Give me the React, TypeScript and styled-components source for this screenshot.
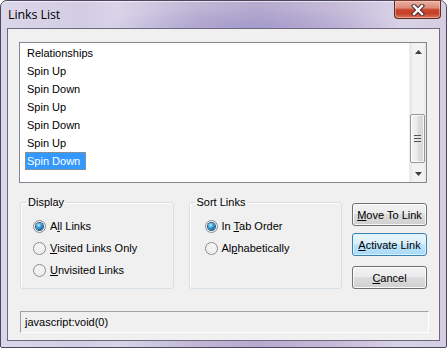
import React from 'react';
import styled, { createGlobalStyle } from 'styled-components';

const Global = createGlobalStyle`
  html, body { margin: 0; padding: 0; background: #ffffff; }
  body { font-family: "Liberation Sans", Arial, sans-serif; font-size: 11px; color: #000; }
  * { box-sizing: border-box; }
`;

const Window = styled.div`
  width: 447px;
  height: 348px;
  display: flex;
  flex-direction: column;
  padding: 0 6px 6px 6px;
  border: 1px solid #4b4760;
  border-radius: 7px 7px 2px 2px;
  background:
    radial-gradient(ellipse 150px 22px at 250px 27px, rgba(150, 140, 200, 0.55), rgba(150, 140, 200, 0) 100%),
    linear-gradient(to right, #dcd6ea 0%, #d3cde4 18%, #d9d4e8 26%, #bfb5d4 45%, #b6abce 58%, #c5bbd8 75%, #d8d2e6 90%, #d4cde3 100%);
  box-shadow: inset 0 1px 0 rgba(255, 255, 255, 0.6);
`;

const TitleBar = styled.div`
  height: 27px;
  display: flex;
  justify-content: space-between;
  align-items: flex-start;
`;

const Title = styled.span`
  font-family: "Open Sans", "Noto Sans", sans-serif;
  font-size: 12.5px;
  color: #000;
  margin: 6px 0 0 1px;
  line-height: 16px;
  letter-spacing: -0.1px;
`;

const CloseButton = styled.div`
  width: 47px;
  height: 19px;
  margin: -1px -1px 0 0;
  border: 1px solid #5e2a24;
  border-top-color: #7a3a30;
  border-radius: 0 0 4px 4px;
  background: linear-gradient(#e9b0a3 0%, #dc8b78 40%, #c8452c 52%, #c54229 75%, #d9775d 100%);
  box-shadow: inset 0 0 0 1px rgba(255, 220, 210, 0.45);
  display: flex;
  align-items: center;
  justify-content: center;
`;

const Client = styled.div`
  flex: 1;
  border: 1px solid #6c687e;
  background: #f0f0f0;
  display: flex;
  flex-direction: column;
  padding: 13px 12px 0 11px;
`;

const ListBox = styled.div`
  height: 141px;
  border: 1px solid #828790;
  background: #ffffff;
  display: flex;
`;

const Items = styled.div`
  flex: 1;
  display: flex;
  flex-direction: column;
  align-items: flex-start;
  padding: 1px 0 0 5px;
`;

const Item = styled.div<{ $selected?: boolean }>`
  height: 18px;
  line-height: 16px;
  padding: 0 5px 0 1px;
  border: 1px ${(p) => (p.$selected ? 'dotted #c9843e' : 'solid transparent')};
  background: ${(p) => (p.$selected ? '#3399ff' : 'transparent')};
  color: ${(p) => (p.$selected ? '#ffffff' : '#000000')};
  white-space: nowrap;
`;

const ScrollBar = styled.div`
  width: 17px;
  display: flex;
  flex-direction: column;
  background: linear-gradient(to right, #e6e6e6 0%, #f2f2f2 20%, #f2f2f2 80%, #e8e8e8 100%);
  border-left: 1px solid #ededed;
`;

const ArrowButton = styled.div`
  height: 17px;
  display: flex;
  align-items: center;
  justify-content: center;
`;

const Track = styled.div`
  flex: 1;
  display: flex;
  flex-direction: column;
  justify-content: flex-end;
  padding: 0 1px 2px 0;
`;

const Thumb = styled.div`
  height: 49px;
  border: 1px solid #979797;
  border-radius: 2px;
  background: linear-gradient(to right, #f3f3f3 0%, #ececec 45%, #dcdcdc 55%, #d6d6d6 100%);
  box-shadow: inset 0 0 0 1px rgba(255, 255, 255, 0.8);
  display: flex;
  align-items: center;
  justify-content: center;
`;

const Grip = styled.div`
  width: 7px;
  height: 8px;
  background: repeating-linear-gradient(to bottom, #555 0px, #555 1px, #e4e4e4 1px, #e4e4e4 2px, transparent 2px, transparent 3px);
`;

const Row = styled.div`
  display: flex;
  align-items: flex-start;
  margin-top: 13px;
  padding-left: 1px;
`;

const Group = styled.fieldset<{ $gap?: number }>`
  width: 154px;
  height: 93px;
  margin: 0 0 0 ${(p) => p.$gap ?? 0}px;
  padding: 0;
  border: 1px solid #d5dfe5;
  border-radius: 3px;
  box-shadow: inset 1px 1px 0 #ffffff;
  min-width: 0;
`;

const Legend = styled.legend`
  margin-left: 5px;
  padding: 0 2px;
  line-height: 13px;
  font-size: 11px;
`;

const RadioList = styled.div<{ $inset: number }>`
  display: flex;
  flex-direction: column;
  padding: 6px 0 0 ${(p) => p.$inset}px;
`;

const RadioRow = styled.label`
  height: 22px;
  display: flex;
  align-items: center;
  gap: 4px;
`;

const RadioCircle = styled.span<{ $checked?: boolean }>`
  width: 13px;
  height: 13px;
  border-radius: 50%;
  border: 1px solid #8d8d8d;
  background: radial-gradient(circle at 50% 45%, #eaeaea 0%, #f6f6f6 35%, #dedede 70%, #c9c9c9 100%);
  box-shadow: inset 0 0 0 1px rgba(255, 255, 255, 0.7);
  display: flex;
  align-items: center;
  justify-content: center;
  flex: none;

  &::after {
    content: '';
    display: ${(p) => (p.$checked ? 'block' : 'none')};
    width: 7px;
    height: 7px;
    border-radius: 50%;
    background: radial-gradient(circle at 38% 32%, #c4f1ff 0%, #4fb4e6 30%, #1272b0 65%, #0a3f6b 100%);
    box-shadow: 0 0 0 1px #2a5a82;
  }
`;

const Buttons = styled.div`
  display: flex;
  flex-direction: column;
  margin: 7px 0 0 10px;
`;

const Button = styled.button<{ $default?: boolean; $gap: number }>`
  width: 75px;
  height: 23px;
  margin-top: ${(p) => p.$gap}px;
  padding: 0;
  font-family: "Liberation Sans", Arial, sans-serif;
  font-size: 11px;
  color: #000;
  border-radius: 3px;
  border: 1px solid ${(p) => (p.$default ? '#3c7fb1' : '#707070')};
  background: ${(p) =>
    p.$default
      ? 'linear-gradient(#eaf6fd 0%, #d9f0fc 49%, #bee6fd 50%, #a7d9f5 100%)'
      : 'linear-gradient(#f2f2f2 0%, #ebebeb 49%, #dddddd 50%, #cfcfcf 100%)'};
  box-shadow: inset 0 0 0 1px ${(p) => (p.$default ? 'rgba(220, 245, 255, 0.9)' : 'rgba(255, 255, 255, 0.85)')};
`;

const Status = styled.div`
  width: 409px;
  height: 22px;
  margin: 22px 0 0 1px;
  padding-left: 4px;
  display: flex;
  align-items: center;
  border: 1px solid;
  border-color: #a0a0a0 #ffffff #ffffff #a0a0a0;
  background: #f0f0f0;
`;

const items = ['Relationships', 'Spin Up', 'Spin Down', 'Spin Up', 'Spin Down', 'Spin Up', 'Spin Down'];

const CloseGlyph = () => (
  <svg width="14" height="12" viewBox="0 0 14 12">
    <path d="M3 2 L11 10 M11 2 L3 10" stroke="#4a2a28" strokeWidth="4.4" strokeLinecap="square" fill="none" />
    <path d="M3 2 L11 10 M11 2 L3 10" stroke="#ffffff" strokeWidth="2.4" strokeLinecap="square" fill="none" />
  </svg>
);

const UpArrow = () => (
  <svg width="7" height="4" viewBox="0 0 7 4">
    <path d="M0 4 L3.5 0 L7 4 Z" fill="#3e3e3e" />
  </svg>
);

const DownArrow = () => (
  <svg width="7" height="4" viewBox="0 0 7 4">
    <path d="M0 0 L7 0 L3.5 4 Z" fill="#3e3e3e" />
  </svg>
);

export default function App() {
  return (
    <>
      <Global />
      <Window>
        <TitleBar>
          <Title>Links List</Title>
          <CloseButton>
            <CloseGlyph />
          </CloseButton>
        </TitleBar>
        <Client>
          <ListBox>
            <Items>
              {items.map((t, i) => (
                <Item key={i} $selected={i === items.length - 1}>
                  {t}
                </Item>
              ))}
            </Items>
            <ScrollBar>
              <ArrowButton>
                <UpArrow />
              </ArrowButton>
              <Track>
                <Thumb>
                  <Grip />
                </Thumb>
              </Track>
              <ArrowButton>
                <DownArrow />
              </ArrowButton>
            </ScrollBar>
          </ListBox>
          <Row>
            <Group>
              <Legend>Display</Legend>
              <RadioList $inset={12}>
                <RadioRow>
                  <RadioCircle $checked />
                  <span>A<u>l</u>l Links</span>
                </RadioRow>
                <RadioRow>
                  <RadioCircle />
                  <span><u>V</u>isited Links Only</span>
                </RadioRow>
                <RadioRow>
                  <RadioCircle />
                  <span><u>U</u>nvisited Links</span>
                </RadioRow>
              </RadioList>
            </Group>
            <Group $gap={15}>
              <Legend>Sort Links</Legend>
              <RadioList $inset={15}>
                <RadioRow>
                  <RadioCircle $checked />
                  <span>In <u>T</u>ab Order</span>
                </RadioRow>
                <RadioRow>
                  <RadioCircle />
                  <span>Al<u>p</u>habetically</span>
                </RadioRow>
              </RadioList>
            </Group>
            <Buttons>
              <Button $gap={0}><u>M</u>ove To Link</Button>
              <Button $gap={7} $default><u>A</u>ctivate Link</Button>
              <Button $gap={10}><u>C</u>ancel</Button>
            </Buttons>
          </Row>
          <Status>javascript:void(0)</Status>
        </Client>
      </Window>
    </>
  );
}
